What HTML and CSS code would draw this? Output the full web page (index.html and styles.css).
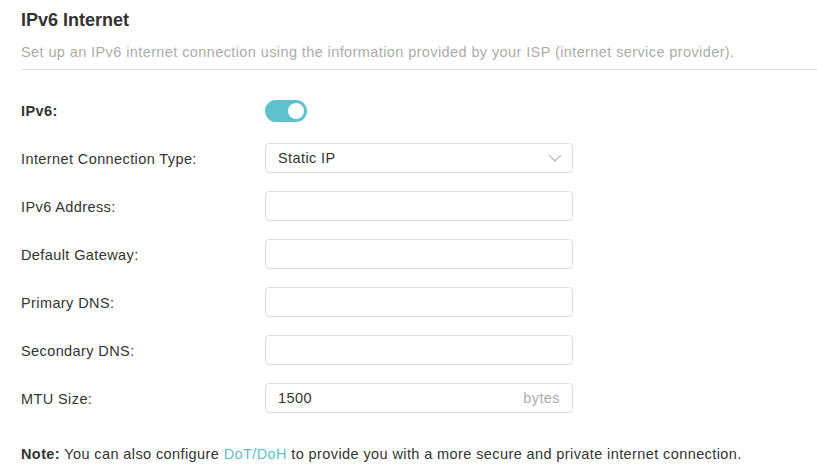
FILE: index.html
```html
<!DOCTYPE html>
<html>
<head>
<meta charset="utf-8">
<link rel="stylesheet" href="styles.css">
</head>
<body>
<div class="page">
  <h1 class="title">IPv6 Internet</h1>
  <p class="subtitle">Set up an IPv6 internet connection using the information provided by your ISP (internet service provider).</p>
  <div class="form">
    <div class="row">
      <div class="label bold">IPv6:</div>
      <div class="toggle"><span class="knob"></span></div>
    </div>
    <div class="row">
      <div class="label">Internet Connection Type:</div>
      <div class="field select">
        <span class="value">Static IP</span>
        <svg class="chev" width="14" height="8" viewBox="0 0 14 8"><path d="M1 1 L7 7 L13 1" fill="none" stroke="#c4c4c4" stroke-width="1.5"/></svg>
      </div>
    </div>
    <div class="row">
      <div class="label">IPv6 Address:</div>
      <div class="field"></div>
    </div>
    <div class="row">
      <div class="label">Default Gateway:</div>
      <div class="field"></div>
    </div>
    <div class="row">
      <div class="label">Primary DNS:</div>
      <div class="field"></div>
    </div>
    <div class="row">
      <div class="label">Secondary DNS:</div>
      <div class="field"></div>
    </div>
    <div class="row">
      <div class="label">MTU Size:</div>
      <div class="field">
        <span class="value">1500</span>
        <span class="unit">bytes</span>
      </div>
    </div>
  </div>
  <p class="note"><b>Note:</b> You can also configure <span class="link">DoT/DoH</span> to provide you with a more secure and private internet connection.</p>
</div>
</body>
</html>
```
FILE: styles.css
```css
html, body {
  margin: 0;
  padding: 0;
  background: #fff;
}
body {
  font-family: "Liberation Sans", Arial, sans-serif;
  color: #333;
  font-size: 14.5px;
  letter-spacing: 0.4px;
}
.page {
  padding: 8px 0 0 21px;
}
.title {
  margin: 0;
  font-size: 18px;
  line-height: 24px;
  font-weight: bold;
  color: #333;
  letter-spacing: 0;
}
.subtitle {
  margin: 10px 0 0 0;
  padding-bottom: 7px;
  line-height: 20px;
  color: #acacac;
  border-bottom: 1px solid #dedede;
}
.form {
  margin-top: 16px;
}
.row {
  display: flex;
  align-items: center;
  height: 48px;
}
.label {
  width: 244px;
  flex: none;
  line-height: 20px;
  padding-top: 1px;
}
.bold {
  font-weight: bold;
}
.toggle {
  width: 42px;
  height: 22px;
  border-radius: 11px;
  background: #5cc1cb;
  display: flex;
  align-items: center;
  justify-content: flex-end;
  padding: 0 3px;
  box-sizing: border-box;
  margin-top: 2px;
}
.knob {
  width: 16px;
  height: 16px;
  border-radius: 50%;
  background: #fff;
}
.field {
  width: 308px;
  height: 30px;
  box-sizing: border-box;
  border: 1px solid #dcdcdc;
  border-radius: 4px;
  display: flex;
  align-items: center;
  justify-content: space-between;
  padding: 0 12px;
}
.value {
  color: #333;
}
.unit {
  color: #acacac;
}
.chev {
  margin-right: -2px;
}
.note {
  margin: 22px 0 0 0;
  line-height: 20px;
  color: #333;
}
.link {
  color: #5cc1cb;
}
```
